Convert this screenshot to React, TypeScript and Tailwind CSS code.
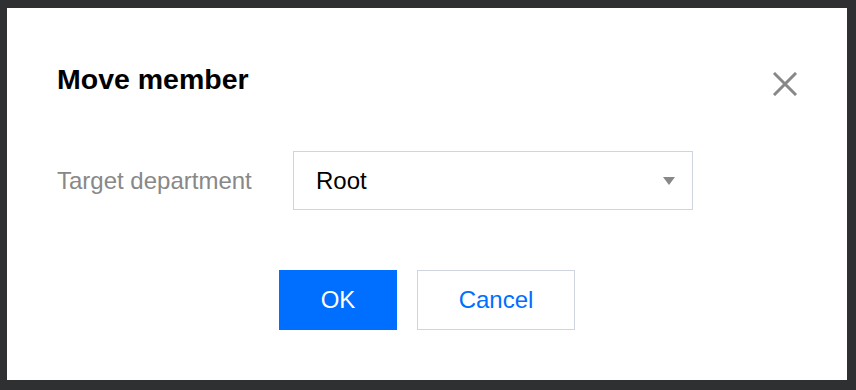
import React from 'react';

const font = { fontFamily: '"Liberation Sans", Arial, Helvetica, sans-serif' };

function CloseIcon() {
  return (
    <svg width="24" height="24" viewBox="0 0 24 24" fill="none">
      <path d="M2 2L22 22M22 2L2 22" stroke="#888888" strokeWidth="3" strokeLinecap="square" />
    </svg>
  );
}

export default function App() {
  return (
    <div className="w-[856px] h-[390px] bg-[#2f3032] pt-[8px] pl-[7px]" style={font}>
      <div className="w-[840px] h-[372px] bg-white pt-[55px] pl-[50px] pr-[50px]">
        {/* Header */}
        <div className="flex items-start justify-between">
          <h1 className="text-[28.5px] leading-[32px] font-bold text-black">Move member</h1>
          <button className="mt-[9px] w-[24px] h-[24px]">
            <CloseIcon />
          </button>
        </div>

        {/* Form row */}
        <div className="mt-[55px] flex items-center">
          <label className="w-[236px] text-[24px] text-[#888888]">Target department</label>
          <div className="w-[400px] h-[59px] border border-[#cfd5de] flex items-center justify-between pl-[22px] pr-[17px]">
            <span className="text-[24px] text-[#000000]">Root</span>
            <svg width="12" height="8" viewBox="0 0 12 8">
              <path d="M0 0H12L6 8Z" fill="#888888" />
            </svg>
          </div>
        </div>

        {/* Footer */}
        <div className="mt-[60px] flex gap-[20px] pl-[222px]">
          <button className="w-[118px] h-[60px] bg-[#006eff] text-white text-[24px]">OK</button>
          <button className="w-[158px] h-[60px] border border-[#cfd5de] text-[#006eff] text-[24px] bg-white">
            Cancel
          </button>
        </div>
      </div>
    </div>
  );
}
